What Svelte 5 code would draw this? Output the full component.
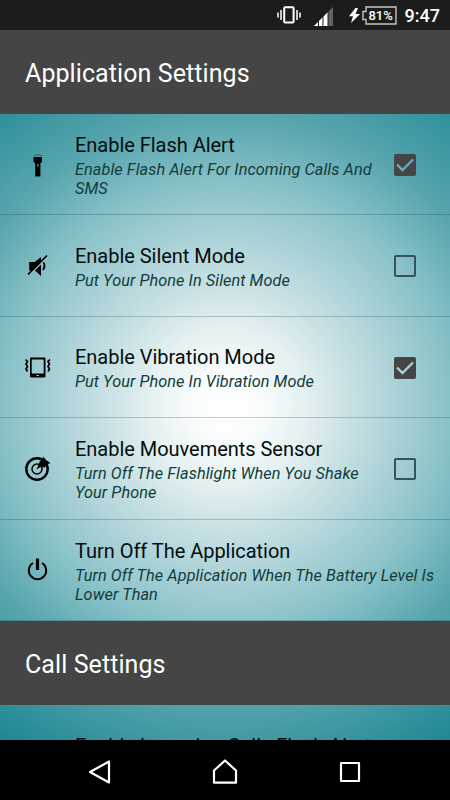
<script>
let items = $state([
    { icon: 'torch', title: 'Enable Flash Alert', summary: 'Enable Flash Alert For Incoming Calls And SMS', checked: true },
    { icon: 'silent', title: 'Enable Silent Mode', summary: 'Put Your Phone In Silent Mode', checked: false },
    { icon: 'vibrate', title: 'Enable Vibration Mode', summary: 'Put Your Phone In Vibration Mode', checked: true },
    { icon: 'sensor', title: 'Enable Mouvements Sensor', summary: 'Turn Off The Flashlight When You Shake Your Phone', checked: false },
    { icon: 'power', title: 'Turn Off The Application', summary: 'Turn Off The Application When The Battery Level Is Lower Than' }
]);

const toggle = (item) => {
    if (item.checked !== undefined) item.checked = !item.checked;
};
</script>

<div class="phone">
    <header class="status">
        <svg class="ringer" width="24" height="18" viewBox="0 0 24 18">
            <rect x="7.2" y="1.3" width="9.4" height="15.2" rx="1" fill="none" stroke="#fff" stroke-width="2" />
            <path d="M4 4v10M20 4v10M1 6.5v5M23 6.5v5" stroke="#fff" stroke-width="1.5" />
        </svg>
        <svg class="signal" width="20" height="19" viewBox="0 0 20 19">
            <path d="M0 19L19 0v19z" fill="#626262" />
            <path d="M0 19L14 5v14z" fill="#fff" />
            <path d="M4.5 8v11M9 5v14M14 3v16" stroke="#1c1c1c" stroke-width="1" />
        </svg>
        <svg class="bolt" width="11" height="15" viewBox="0 0 11 15">
            <path d="M6.5 0L0 8.2h4L2 15 11 6H6.5L9 0z" fill="#fff" />
        </svg>
        <div class="battery">
            <svg width="35" height="19" viewBox="0 0 35 19">
                <path d="M4 1h30v17H4v-4.500H1v-8h3z" fill="none" stroke="#c4c4c4" stroke-width="1.400" />
            </svg>
            <span>81%</span>
        </div>
        <span class="clock">9:47</span>
    </header>

    <main>
        <h2>Application Settings</h2>
        {#each items as item}
            <div class="row">
                <div class="icon">
                    {#if item.icon == 'torch'}
                        <svg width="26" height="26" viewBox="0 0 26 26">
                            <path d="M9 3.500q4-1.500 8 0" fill="none" stroke="#000" stroke-opacity=".4" />
                            <path d="M8.500 5h8.500v4.500l-1.600 2V24.500h-5.200V11.500L8.500 9.500z" />
                            <path d="M13 12v2.500" stroke="#5faab2" stroke-width="1.200" />
                        </svg>
                    {:else if item.icon == 'silent'}
                        <svg width="26" height="26" viewBox="0 0 26 26">
                            <path d="M4.200 9h5.500L16 4v19l-6-5.500H4.200z" />
                            <path d="M18 9q3 3.500 0 8" fill="none" stroke="#000" stroke-width="1.800" />
                            <path d="M4 22.500L23 3.500" stroke="#8fc5cb" stroke-width="1.400" />
                            <path d="M3 21.500L22 2.500" stroke="#000" stroke-width="1.700" />
                        </svg>
                    {:else if item.icon == 'vibrate'}
                        <svg width="26" height="26" viewBox="0 0 26 26">
                            <path fill-rule="evenodd" d="M6 2.500h13.500q1 0 1 1v18q0 1-1 1H6q-1 0-1-1v-18q0-1 1-1zM6.700 4.500v14h12v-14zM11.500 20v1H14v-1z" />
                            <path d="M.5 4.500l2 2-1.500 2.500 1.500 2.500-1.500 2.500 1.500 2.500M25 4.500l-2 2 1.500 2.500-1.500 2.500 1.500 2.500-1.500 2.500" fill="none" stroke="#000" stroke-width="1.700" />
                        </svg>
                    {:else if item.icon == 'sensor'}
                        <svg width="26" height="26" viewBox="0 0 26 26">
                            <circle cx="12" cy="13" r="10.700" fill="none" stroke="#000" stroke-width="2.400" />
                            <circle cx="12" cy="13" r="5" fill="none" stroke="#000" stroke-width="1.500" />
                            <path d="M11.500 13.500l3.500-8.500 2.500-1L18 .5l3 3.500 4.500 3-4 1.500-1.500 3-4.500-.5z" />
                        </svg>
                    {:else}
                        <svg width="26" height="26" viewBox="0 0 26 26">
                            <path d="M8 6a8.700 8.700 0 1 0 9 0" fill="none" stroke="#000" stroke-width="2" />
                            <path d="M12.500 1.500v11.500" stroke="#000" stroke-width="3.200" />
                        </svg>
                    {/if}
                </div>
                <div class="text">
                    <p class="title">{item.title}</p>
                    <p class="summary">{item.summary}</p>
                </div>
                {#if item.checked !== undefined}
                    <button class="check" class:checked={item.checked} aria-label={item.title} onclick={() => toggle(item)}>
                        {#if item.checked}
                            <svg class={item.icon} width="22" height="22" viewBox="0 0 22 22">
                                <path d="M3 10.500l5.500 5.500L19 5.500" fill="none" stroke="currentColor" stroke-width="2.400" />
                            </svg>
                        {/if}
                    </button>
                {/if}
            </div>
        {/each}
        <h2>Call Settings</h2>
        <div class="row partial">
            <div class="icon"></div>
            <div class="text">
                <p class="title">Enable Incoming Calls Flash Alert</p>
            </div>
        </div>
    </main>

    <nav>
        <svg width="26" height="26" viewBox="0 0 26 26">
            <path d="M22 2.500v21L3 13z" />
        </svg>
        <svg width="26" height="26" viewBox="0 0 26 26">
            <path d="M13 1.500l11 10v12.200H2V11.500z" />
        </svg>
        <svg width="26" height="26" viewBox="0 0 26 26">
            <path d="M4 4h18v18H4z" />
        </svg>
    </nav>
</div>

<style>
:global(body) {
    margin: 0;
}

.phone {
    width: 450px;
    height: 800px;
    display: flex;
    flex-direction: column;
    overflow: hidden;
    background: #000;
    font-family: Roboto, sans-serif;
}

.status {
    height: 30px;
    flex: none;
    box-sizing: border-box;
    padding-right: 10px;
    display: flex;
    align-items: center;
    justify-content: flex-end;
    background: #1c1c1c;
    color: #fff;
}

.ringer {
    margin-right: 13px;
}

.signal {
    margin: 2px 15px 0 0;
}

.bolt {
    margin-right: 2px;
}

.battery {
    display: grid;
    width: 35px;
    height: 19px;
    margin-right: 8px;
}

.battery svg,
.battery span {
    grid-area: 1 / 1;
}

.battery span {
    padding-left: 3px;
    font-size: 13px;
    line-height: 19px;
    font-weight: 500;
    text-align: center;
}

.clock {
    font-size: 18px;
    font-weight: 500;
}

main {
    flex: 1;
    min-height: 0;
    overflow: hidden;
    background: radial-gradient(circle at 227px 377px, #fff 0, #fbfdfd 30px, #e4f0f1 80px, #c7e0e3 125px, #88c1c8 225px, #58a5ae 290px, #30909c 367px, #1d8493 410px);
}

h2 {
    margin: 0;
    height: 84px;
    box-sizing: border-box;
    padding: 3px 25px 0;
    font-size: 25px;
    font-weight: 400;
    letter-spacing: .08px;
    line-height: 82px;
    background: #454545;
    color: #fff;
}

.row {
    height: 101.4px;
    box-sizing: border-box;
    display: flex;
    align-items: center;
    padding: 1.4px 10px 0 25px;
    border-bottom: 1px solid rgba(20, 60, 70, .25);
}

.icon {
    width: 50px;
    flex: none;
}

.icon svg {
    display: block;
}

.text {
    flex: 1;
    padding-top: 1.4px;
    color: #050c0e;
}

p {
    margin: 0;
}

.title {
    font-size: 20px;
    line-height: 24px;
    letter-spacing: -.03px;
}

.summary {
    margin-top: 3px;
    font-size: 16.25px;
    line-height: 19px;
    letter-spacing: .08px;
    font-style: italic;
    color: #113c3b;
}

.check {
    width: 22px;
    height: 22px;
    flex: none;
    box-sizing: border-box;
    margin: 0 24px 0 18px;
    padding: 0;
    border: 2px solid #36525a;
    border-radius: 2px;
    background: none;
}

.check.checked {
    border: 0;
    background: #454545;
    color: #5fb0ba;
}

.check svg {
    display: block;
}

.check .vibrate {
    color: #a8d3d8;
}

.partial {
    align-items: flex-start;
    padding-top: 28px;
}

nav {
    height: 60px;
    flex: none;
    display: flex;
    justify-content: center;
    align-items: center;
    gap: 99px;
    padding-top: 3px;
    box-sizing: border-box;
}

nav path {
    fill: none;
    stroke: #fff;
    stroke-width: 2.2;
    stroke-linejoin: round;
}
</style>
